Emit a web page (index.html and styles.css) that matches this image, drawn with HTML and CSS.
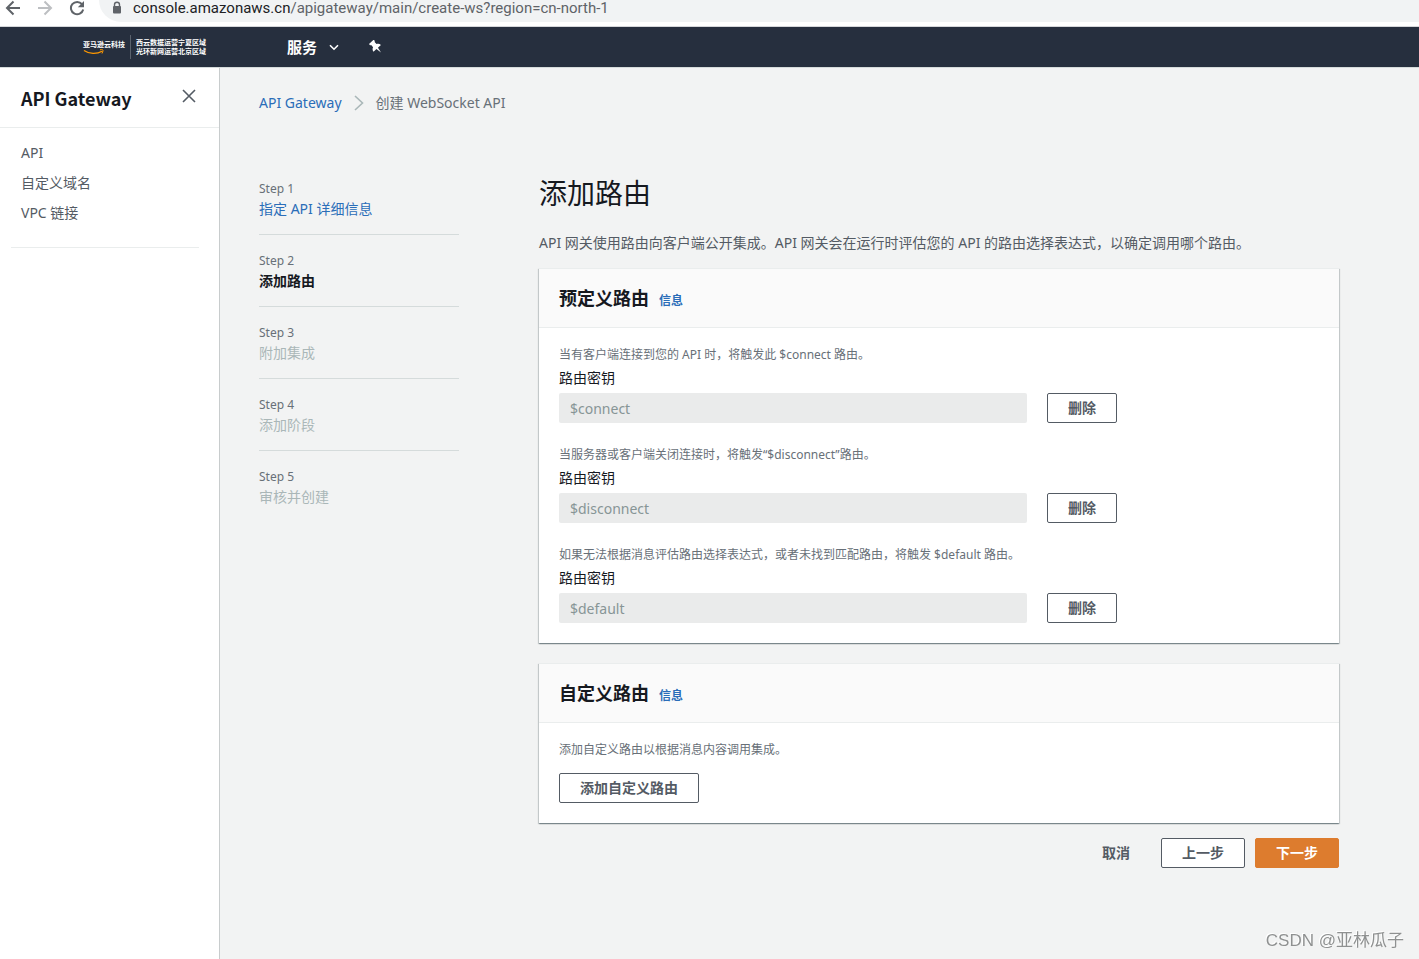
FILE: index.html
```html
<!DOCTYPE html>
<html lang="zh-CN">
<head>
<meta charset="utf-8">
<title>API Gateway - 创建 WebSocket API</title>
<link rel="stylesheet" href="styles.css">
</head>
<body>
<div class="browser-bar">
  <button class="browser-button" type="button" aria-label="Back">
    <svg width="16" height="16" viewBox="0 0 16 16" fill="none" stroke="#5f6368" stroke-width="2"><path d="M15 8H2M8.500 1.500 2 8l6.500 6.500"/></svg>
  </button>
  <button class="browser-button" type="button" aria-label="Forward">
    <svg width="16" height="16" viewBox="0 0 16 16" fill="none" stroke="#bdbfc2" stroke-width="2"><path d="M1 8h13M7.500 1.500 14 8l-6.500 6.500"/></svg>
  </button>
  <button class="browser-button" type="button" aria-label="Reload">
    <svg width="16" height="16" viewBox="0 0 16 16"><path d="M13 4.200A6.200 6.200 0 1 0 14.200 9.500" fill="none" stroke="#5f6368" stroke-width="2"/><path d="M15 1v6.200H8.800z" fill="#5f6368"/></svg>
  </button>
  <div class="address">
    <svg width="10" height="16" viewBox="0 0 10 16"><path d="M2.500 7V4.700a2.500 2.500 0 0 1 5 0V7" fill="none" stroke="#5f6368" stroke-width="1.400"/><rect x="1" y="6" width="8" height="7.500" rx="1" fill="#5f6368"/></svg>
    <span><span class="address-host">console.amazonaws.cn</span>/apigateway/main/create-ws?region=cn-north-1</span>
  </div>
</div>

<header class="top-nav">
  <a class="brand" href="#">
    <span class="brand-name">亚马逊云科技
      <svg width="22" height="6" viewBox="0 0 22 6" fill="none" stroke="#f90"><path d="M1 1.500c5 3.500 13 3.700 18 .7" stroke-width="1.300"/><path d="M17 .8c2-.5 3.500-.2 3 1.200L19 4.500" stroke-width="1"/></svg>
    </span>
    <span class="brand-regions">西云数据运营宁夏区域<br>光环新网运营北京区域</span>
  </a>
  <button class="services" type="button">服务
    <svg width="10" height="7" viewBox="0 0 10 7" fill="none" stroke="#fff" stroke-width="1.600"><path d="m1 1.200 4 4 4-4"/></svg>
  </button>
  <button class="pin" type="button" aria-label="Pin">
    <svg width="14" height="14" viewBox="0 0 14 14" fill="#fff"><path transform="rotate(-42 7 7)" d="M3.800 0h6.400v2H9.300v3.200c1.600.6 2.500 1.700 2.700 3.600H8L7 14.500 6 8.800H2c.2-1.900 1.100-3 2.700-3.600V2h-.9z"/></svg>
  </button>
</header>

<div class="app">
  <nav class="sidebar">
    <div class="sidebar-head">
      <h2 class="sidebar-title">API Gateway</h2>
      <button class="close" type="button" aria-label="Close">
        <svg width="14" height="14" viewBox="0 0 14 14" stroke="#545b64" stroke-width="1.600"><path d="m1 1 12 12M13 1 1 13"/></svg>
      </button>
    </div>
    <ul class="sidebar-links">
      <li><a href="#">API</a></li>
      <li><a href="#">自定义域名</a></li>
      <li><a href="#">VPC 链接</a></li>
    </ul>
  </nav>

  <main class="main">
    <nav class="breadcrumb">
      <a class="link" href="#">API Gateway</a>
      <svg width="10" height="16" viewBox="0 0 10 16" fill="none" stroke="#aab7b8" stroke-width="1.600"><path d="m1 1 7.500 7L1 15"/></svg>
      <span>创建 WebSocket API</span>
    </nav>

    <div class="wizard">
      <ol class="steps">
        <li class="step"><small>Step 1</small><a class="link" href="#">指定 API 详细信息</a></li>
        <li class="step step-current"><small>Step 2</small><span>添加路由</span></li>
        <li class="step step-later"><small>Step 3</small><span>附加集成</span></li>
        <li class="step step-later"><small>Step 4</small><span>添加阶段</span></li>
        <li class="step step-later"><small>Step 5</small><span>审核并创建</span></li>
      </ol>

      <form class="content">
        <h1 class="title">添加路由</h1>
        <p class="intro">API 网关使用路由向客户端公开集成。API 网关会在运行时评估您的 API 的路由选择表达式，以确定调用哪个路由。</p>

        <section class="panel">
          <div class="panel-head">
            <h2 class="panel-title">预定义路由</h2><a class="info" href="#">信息</a>
          </div>
          <div class="panel-body routes">
            <div class="route">
              <p class="hint">当有客户端连接到您的 API 时，将触发此 $connect 路由。</p>
              <label class="label" for="connect">路由密钥</label>
              <div class="route-row">
                <input class="input" id="connect" type="text" value="$connect" disabled>
                <button class="button" type="button">删除</button>
              </div>
            </div>
            <div class="route">
              <p class="hint">当服务器或客户端关闭连接时，将触发“$disconnect”路由。</p>
              <label class="label" for="disconnect">路由密钥</label>
              <div class="route-row">
                <input class="input" id="disconnect" type="text" value="$disconnect" disabled>
                <button class="button" type="button">删除</button>
              </div>
            </div>
            <div class="route">
              <p class="hint">如果无法根据消息评估路由选择表达式，或者未找到匹配路由，将触发 $default 路由。</p>
              <label class="label" for="default">路由密钥</label>
              <div class="route-row">
                <input class="input" id="default" type="text" value="$default" disabled>
                <button class="button" type="button">删除</button>
              </div>
            </div>
          </div>
        </section>

        <section class="panel">
          <div class="panel-head">
            <h2 class="panel-title">自定义路由</h2><a class="info" href="#">信息</a>
          </div>
          <div class="panel-body custom">
            <p class="hint">添加自定义路由以根据消息内容调用集成。</p>
            <button class="button" type="button">添加自定义路由</button>
          </div>
        </section>

        <div class="actions">
          <button class="button button-plain" type="button">取消</button>
          <button class="button" type="button">上一步</button>
          <button class="button button-primary" type="submit">下一步</button>
        </div>
      </form>
    </div>
  </main>
</div>
<div class="watermark">CSDN @亚林瓜子</div>
</body>
</html>
```
FILE: styles.css
```css
* { box-sizing: border-box; }

body {
  margin: 0;
  min-height: 100vh;
  display: flex;
  flex-direction: column;
  background: #f2f3f3;
  color: #16191f;
  font: 14px/20px "Noto Sans", "Noto Sans CJK SC", sans-serif;
}

h1, h2, p, ul, ol { margin: 0; padding: 0; }
ul, ol { list-style: none; }
a { color: inherit; text-decoration: none; }
svg { display: block; flex: none; }
button { font: inherit; color: inherit; cursor: pointer; }

.browser-bar {
  display: flex;
  align-items: flex-start;
  height: 27px;
  padding-left: 5px;
  gap: 16px;
  background: #fff;
  border-bottom: 1px solid #d5d7da;
}
.browser-button { padding: 0; border: 0; background: none; }
.address {
  flex: 1;
  display: flex;
  align-items: flex-start;
  gap: 11px;
  height: 22px;
  margin-left: -2px;
  padding-left: 13px;
  border-radius: 0 0 0 22px;
  background: #f1f3f4;
  color: #5f6368;
  font: 15px/16px Roboto, sans-serif;
}
.address-host { color: #202124; }

.top-nav {
  display: flex;
  align-items: center;
  height: 41px;
  padding-left: 83px;
  background: #262f3e;
  border-bottom: 1px solid #d5dbdb;
  color: #fff;
}
.brand {
  display: flex;
  align-items: center;
  font: 700 7px/9px "Noto Sans CJK SC", sans-serif;
}
.brand-name { padding-right: 5px; }
.brand-regions {
  padding: 3px 0 3px 5px;
  border-left: 1px solid #5a626d;
}
.services {
  display: flex;
  align-items: center;
  gap: 12px;
  margin-left: 81px;
  padding: 0;
  border: 0;
  background: none;
  font-size: 15px;
  font-weight: 700;
}
.pin { margin-left: 30px; padding: 0; border: 0; background: none; }

.app { flex: 1; display: flex; }

.sidebar {
  flex: 0 0 220px;
  background: #fff;
  border-right: 1px solid #c8cccd;
}
.sidebar-head {
  display: flex;
  justify-content: space-between;
  padding: 19px 23px 18px 21px;
  border-bottom: 1px solid #eaeded;
}
.sidebar-title {
  font: 700 18px/22px "Noto Sans CJK SC", sans-serif;
}
.close { align-self: flex-start; padding: 2px 0; border: 0; background: none; }
.sidebar-links {
  display: grid;
  gap: 10px;
  margin: 0 20px 0 11px;
  padding: 15px 10px 24px;
  border-bottom: 1px solid #eaeded;
  color: #545b64;
}

.main { flex: 1; min-width: 0; padding: 25px 80px 40px 39px; }
.link { color: #2a6db8; }
.breadcrumb {
  display: flex;
  align-items: center;
  gap: 12px;
  color: #687078;
}
.wizard { display: flex; gap: 80px; padding-top: 62px; }

.steps { flex: 0 0 200px; padding-top: 4px; }
.step {
  display: grid;
  padding-bottom: 15px;
  margin-bottom: 16px;
  border-bottom: 1px solid #d5dbdb;
}
.step:last-child { border-bottom: 0; }
.step small { font-size: 12px; color: #687078; }
.step-current { font-weight: 700; }
.step-current small { font-weight: 400; }
.step-later { color: #aab7b8; }

.content { flex: 1; min-width: 0; }
.title { font-size: 28px; line-height: 36px; font-weight: 400; }
.intro { margin: 22px 0 15px; color: #545b64; }

.panel {
  border-top: 1px solid #eaeded;
  background: #fff;
  box-shadow: 0 1px 1px rgba(0, 28, 36, 0.3), 1px 1px 1px rgba(0, 28, 36, 0.15), -1px 1px 1px rgba(0, 28, 36, 0.15);
}
.panel + .panel { margin-top: 20px; }
.panel-head {
  display: flex;
  align-items: baseline;
  gap: 10px;
  padding: 18px 20px;
  background: #fafafa;
  border-bottom: 1px solid #eaeded;
}
.panel-title { font-size: 18px; line-height: 22px; }
.info { color: #2a6db8; font-size: 12px; line-height: 16px; font-weight: 700; }
.panel-body { padding: 17px 20px 20px; }
.routes { display: grid; gap: 22px; }
.hint { color: #687078; font-size: 12px; line-height: 20px; }
.label { display: block; padding: 3px 0 5px; }
.route-row { display: flex; gap: 20px; }
.input {
  flex: 0 1 468px;
  min-width: 0;
  height: 30px;
  padding: 0 11px;
  border: 0;
  border-radius: 2px;
  background: #eaebeb;
  color: #879596;
  font: inherit;
}
.button {
  height: 30px;
  padding: 0 20px;
  border: 1px solid #545b64;
  border-radius: 2px;
  background: #fff;
  color: #545b64;
  font-weight: 700;
}
.custom .button { margin-top: 13px; }
.actions {
  display: flex;
  justify-content: flex-end;
  gap: 10px;
  margin-top: 15px;
}
.button-plain { border-color: transparent; background: transparent; }
.button-primary { border-color: #dd7c2e; background: #dd7c2e; color: #fff; }

.watermark {
  position: fixed;
  right: 15px;
  bottom: 6px;
  color: #8f9191;
  font: 17px/24px "Liberation Sans", "Noto Sans CJK SC", sans-serif;
  text-shadow: -1px -1px 0 #fff;
}
```
